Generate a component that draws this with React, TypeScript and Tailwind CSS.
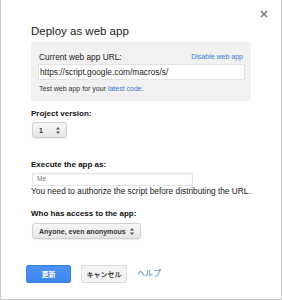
import React from 'react';

const font = { fontFamily: '"Liberation Sans", Arial, "Noto Sans CJK JP", sans-serif' };

const UpDown = () => (
  <svg width="4" height="7" viewBox="0 0 4 7" className="shrink-0">
    <path d="M2 0 L4 2.6 L0 2.6 Z" fill="#555" />
    <path d="M2 7 L4 4.4 L0 4.4 Z" fill="#555" />
  </svg>
);

const Select = ({ label, width }: { label: string; width: string }) => (
  <div
    className={`${width} h-4 ml-px flex items-center justify-between pl-[6px] pr-[6px] rounded-[3px] border border-[#d0d0d0] bg-gradient-to-b from-[#f7f7f7] to-[#e6e6e6] shadow-[0_1px_1px_rgba(0,0,0,0.08)]`}
  >
    <span className="text-[7px] font-bold text-[#333] leading-none">{label}</span>
    <UpDown />
  </div>
);

export default function App() {
  return (
    <div
      style={font}
      className="relative w-[282px] h-[300px] bg-white border-l border-r border-b border-[#c9c9c9] pl-[30px] pr-[30px] pt-[25px] text-[#222]"
    >
      {/* close */}
      <svg width="8" height="8" viewBox="0 0 8 8" className="absolute right-[13px] top-[10px]">
        <path d="M1 1 L7 7 M7 1 L1 7" stroke="#7a7a7a" strokeWidth="1.6" />
      </svg>

      <h1 className="text-[11.5px] leading-[13px] text-[#222]">Deploy as web app</h1>

      <div className="mt-[4px] w-[220px] bg-[#f1f1f1] pl-[7px] pr-[6px] pt-[10px] pb-[8px]">
        <div className="flex items-center justify-between pl-px pr-[2px] h-[10px]">
          <span className="text-[8.3px] leading-[10px] text-[#222]">Current web app URL:</span>
          <span className="text-[7px] leading-[10px] text-[#3b7ad8]">Disable web app</span>
        </div>
        <div className="mt-[2px] h-4 bg-white border border-[#e2e2e2] flex items-center pl-px">
          <span className="text-[8.3px] text-[#222] leading-none">https://script.google.com/macros/s/</span>
        </div>
        <div className="mt-[4px] pl-px text-[7px] leading-[9px] text-[#333]">
          Test web app for your <span className="text-[#3b7ad8]">latest code</span>.
        </div>
      </div>

      <div className="mt-[8px] text-[8px] leading-[10px] font-bold text-[#111]">Project version:</div>
      <div className="mt-[3px]">
        <Select label="1" width="w-[35px]" />
      </div>

      <div className="mt-[22px] text-[8px] leading-[10px] font-bold text-[#111]">Execute the app as:</div>
      <div className="mt-[3px] ml-px w-[161px] h-[13px] bg-white border border-[#e4e4e4] shadow-[inset_0_1px_1px_rgba(0,0,0,0.05)] flex items-center pl-[4px]">
        <span className="text-[6.5px] text-[#777] leading-none">Me</span>
      </div>
      <div className="text-[8.3px] leading-[10px] text-[#222]">
        You need to authorize the script before distributing the URL.
      </div>

      <div className="mt-[13px] text-[8px] leading-[10px] font-bold text-[#111]">Who has access to the app:</div>
      <div className="mt-[4px]">
        <Select label="Anyone, even anonymous" width="w-[109px]" />
      </div>

      <div className="mt-[26px] -ml-[5px] flex items-center gap-[10px]">
        <div className="w-[45px] h-[18px] rounded-[2px] bg-gradient-to-b from-[#4a92f9] to-[#3d86f1] border border-[#3a82ea] flex items-center justify-center">
          <span className="text-[7px] font-bold text-white leading-none">更新</span>
        </div>
        <div className="w-[46px] h-[18px] rounded-[2px] bg-[#f4f4f4] border border-[#dcdcdc] flex items-center justify-center">
          <span className="text-[7px] font-bold text-[#444] leading-none">キャンセル</span>
        </div>
        <span className="text-[8px] text-[#3b7ad8] leading-none">ヘルプ</span>
      </div>
    </div>
  );
}
